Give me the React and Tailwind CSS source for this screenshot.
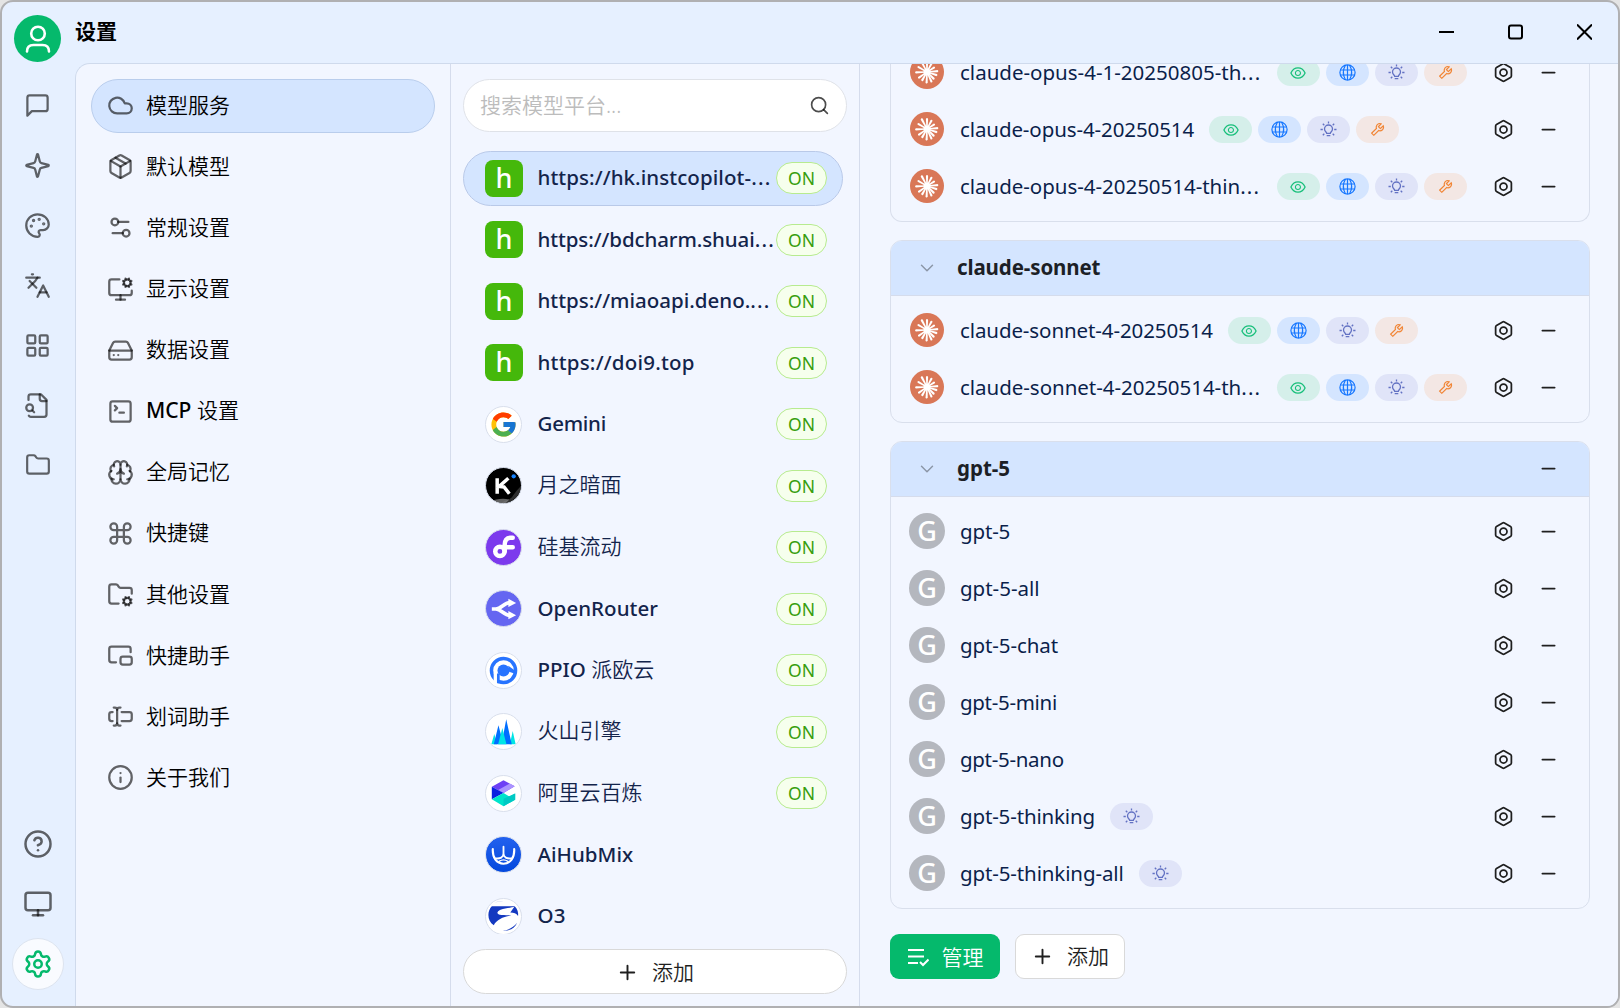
import React from "react";
import {
  Palette, Languages, LayoutGrid, Folder, CircleHelp, Monitor, Settings,
  Cloud, Package, Settings2, MonitorCog, HardDrive, SquareTerminal, Brain,
  Command, FolderCog, PictureInPicture2, TextCursorInput, Info, Search,
  Bolt, Minus, Plus, ChevronDown,
} from "lucide-react";
import { FcGoogle } from "react-icons/fc";
import { AiOutlineEye, AiOutlineTool } from "react-icons/ai";

function Stroke({ size = 27, children, className = "" }) {
  return (
    <svg width={size} height={size} viewBox="0 0 24 24" fill="none" stroke="currentColor" strokeWidth="2" strokeLinecap="round" strokeLinejoin="round" className={className}>
      {children}
    </svg>
  );
}

const Chat = () => (
  <Stroke><path d="M21 15a2 2 0 0 1-2 2H7l-4 4V5a2 2 0 0 1 2-2h14a2 2 0 0 1 2 2z" /></Stroke>
);
const Sparkle = () => (
  <Stroke><path d="M9.937 15.5A2 2 0 0 0 8.5 14.063l-6.135-1.582a.5.5 0 0 1 0-.962L8.5 9.936A2 2 0 0 0 9.937 8.5l1.582-6.135a.5.5 0 0 1 .963 0L14.063 8.5A2 2 0 0 0 15.5 9.937l6.135 1.581a.5.5 0 0 1 0 .964L15.5 14.063a2 2 0 0 0-1.437 1.437l-1.582 6.135a.5.5 0 0 1-.963 0z" /></Stroke>
);
const FileSearch = () => (
  <Stroke>
    <path d="M14 2v4a2 2 0 0 0 2 2h4" />
    <path d="M4.268 21a2 2 0 0 0 1.727 1H18a2 2 0 0 0 2-2V7l-5-5H6a2 2 0 0 0-2 2v3" />
    <path d="m9 18-1.5-1.5" />
    <circle cx="5" cy="14" r="3" />
  </Stroke>
);

const navIcons = [
  <Chat />, <Sparkle />, <Palette size={27} />, <Languages size={27} />,
  <LayoutGrid size={27} />, <FileSearch />, <Folder size={26} />,
];

const settings = [
  [Cloud, "模型服务"], [Package, "默认模型"], [Settings2, "常规设置"],
  [MonitorCog, "显示设置"], [HardDrive, "数据设置"], [SquareTerminal, "设置", "MCP"],
  [Brain, "全局记忆"], [Command, "快捷键"], [FolderCog, "其他设置"],
  [PictureInPicture2, "快捷助手"], [TextCursorInput, "划词助手"], [Info, "关于我们"],
];

function Letter() {
  return (
    <div className="flex h-[37px] w-[38px] items-center justify-center rounded-[8px] bg-[#45b80b] pb-[2px] text-[27px] leading-none font-medium text-white">h</div>
  );
}

function Round({ className = "bg-white", children }) {
  return (
    <div className={`flex h-[37px] w-[37px] items-center justify-center overflow-hidden rounded-full border border-[#d9dfec] ${className}`}>
      {children}
    </div>
  );
}

const Kimi = () => (
  <Round className="bg-black">
    <svg width="36" height="36" viewBox="0 0 36 36">
      <path d="M15 36c3-3 9-3 12-7s4-6 9-11v18z" fill="#3c3c3c" opacity=".75" />
      <path d="M4 34c6-2 12-4 20-2l-4 4H6z" fill="#8a8a8a" opacity=".7" />
      <path d="M11.500 10v16M23 10l-9.500 8.500 5 .5 5.500 7" fill="none" stroke="#fff" strokeWidth="3.600" />
      <circle cx="28.500" cy="8" r="2.200" fill="#1783ff" />
    </svg>
  </Round>
);
const Silicon = () => (
  <Round className="bg-[#7c3aed]">
    <svg width="36" height="36" viewBox="0 0 36 36" fill="none" stroke="#fff" strokeWidth="4.600" strokeLinecap="round">
      <circle cx="14.300" cy="22.500" r="4.800" />
      <path d="M19.200 22.500v-6.500c0-5 2-7.500 6-7.500h2.300M19.200 18.300h8.300" />
    </svg>
  </Round>
);
const OpenRouter = () => (
  <Round className="bg-[#6566f1]">
    <svg width="36" height="36" viewBox="0 0 36 36">
      <path d="M6 18h4c6 0 8-6.500 15-6.500M10 18c6 0 8 6.500 15 6.500" fill="none" stroke="#fff" strokeWidth="3.800" />
      <path d="M23 7.500l8 4.200-8 4.300zM23 20l8 4.300-8 4.200z" fill="#fff" />
    </svg>
  </Round>
);
const Ppio = () => (
  <Round>
    <svg width="35" height="35" viewBox="0 0 36 36">
      <circle cx="18" cy="18" r="12.400" fill="none" stroke="#2874ff" strokeWidth="3.600" />
      <circle cx="18" cy="18" r="6.200" fill="#2874ff" />
      <path d="M23 13l6 4.500v3.500l-6-2z" fill="#2874ff" />
      <path d="M9.600 20v14" stroke="#fff" strokeWidth="3.400" />
      <path d="M12.700 21v10" stroke="#2874ff" strokeWidth="2.800" />
    </svg>
  </Round>
);
const Volc = () => (
  <Round>
    <svg width="36" height="36" viewBox="0 0 36 36">
      <path d="M5.500 30.500L8.500 20l3 10.500z M24.500 30.500L27.500 17l3 13.500z" fill="#00e5e5" />
      <path d="M8 30.500L12.800 11 18 30.500z M16 30.500L20.800 5 26.500 30.500z" fill="#006eff" />
      <path d="M12.500 30.500l4.300-16.500 4.200 16.500z" fill="#00e5e5" />
    </svg>
  </Round>
);
const Bailian = () => (
  <Round>
    <svg width="36" height="36" viewBox="0 0 36 36">
      <path d="M6 11.500l12-6.500 11.500 6L18 18z" fill="#6e40f5" />
      <path d="M12.500 15l12-6.700 5 2.700-11.500 7z" fill="#ab93ff" />
      <path d="M6 11.500l12 6.500-12 6.500z" fill="#0a1fe0" />
      <path d="M6 24.500L18 18l6 3.500 6-3v6.500l-12 6.500z" fill="#00e4cb" />
      <path d="M18 24l12-5.500V25l-12 6.500z" fill="#00c9c4" />
    </svg>
  </Round>
);
const AiHubMix = () => (
  <Round className="bg-linear-to-b from-[#2261ee] to-[#0348dd]">
    <svg width="36" height="36" viewBox="0 0 36 36" fill="none" stroke="#fff" strokeWidth="2.200" strokeLinecap="round">
      <path d="M7 12c-.5 9 4 15 11 15s11.500-6 11-15" />
      <path d="M18 9.500v7c0 4-3.500 5.500-8 5M18 16.500c0 4 3.500 5.500 8 5" strokeWidth="1.900" />
      <path d="M13.500 24.500q4.500-3 9 0" strokeWidth="1.400" />
    </svg>
  </Round>
);
const O3 = () => (
  <Round>
    <svg width="36" height="36" viewBox="0 0 36 36" fill="#1439c0">
      <path d="M6 8h24c-4 2-10 1.500-15 3.500-5 2.500-4 5 1 5.500 4 .3 7 0 10 .5-8 1-15 4-18 10C1 23 1 13 6 8z" />
      <path d="M25 14.500l4.500-6.500c3 3 4 7 3.500 10-2-2.500-4-3.500-8-3.500z" />
      <path d="M16 33c7 0 12-3 16-8-2 5-7 9-16 8z" />
      <path d="M9 4.500c3-2 6-2 9-2-3 .5-6 .5-9 2z" opacity=".4" />
    </svg>
  </Round>
);

const providers = [
  [<Letter />, "https://hk.instcopilot-", true, "tracking-[0.07px]", "", true],
  [<Letter />, "https://bdcharm.shuai", true, "tracking-[-0.1px]", "", true],
  [<Letter />, "https://miaoapi.deno.", true, "tracking-[0px]", "", true],
  [<Letter />, "https://doi9.top", true, "tracking-[0.22px]"],
  [<Round><FcGoogle size={29} /></Round>, "Gemini", true, "tracking-[-0.25px]"],
  [<Kimi />, "月之暗面", true, ""],
  [<Silicon />, "硅基流动", true, ""],
  [<OpenRouter />, "OpenRouter", true, "tracking-[0.05px]"],
  [<Ppio />, "派欧云", true, "", "PPIO"],
  [<Volc />, "火山引擎", true, ""],
  [<Bailian />, "阿里云百炼", true, ""],
  [<AiHubMix />, "AiHubMix", false, "tracking-[0.05px]"],
  [<O3 />, "O3", false, "tracking-[0.2px]"],
];

const isHan = (text) => /[\u4e00-\u9fff]/.test(text);

const rays = [
  [0, 11], [28, 10.5], [58, 9.5], [85, 11.5], [108, 11], [135, 10.5], [155, 11.5],
  [182, 11.5], [210, 10.5], [235, 11], [268, 12], [300, 11], [332, 12],
];

function ClaudeAvatar() {
  return (
    <svg width="34" height="34" viewBox="-17 -17 34 34" className="mx-px mb-[1px] shrink-0">
      <circle r="17" fill="#d97757" />
      <circle r="3.500" fill="#fff" />
      {rays.map(([a, l]) => (
        <path key={a} d={`M-.6 0L-1.100 ${-l + 0.8}Q0 ${-l - 0.8} 1.100 ${-l + 0.8}L.6 0z`} transform={`rotate(${a})`} fill="#fff" />
      ))}
    </svg>
  );
}

function GAvatar() {
  return (
    <div className="mb-[1px] flex h-9 w-9 shrink-0 items-center justify-center rounded-full bg-[#b4b7be] pb-[1px] text-[27px] leading-none font-medium text-white">G</div>
  );
}

const Globe = () => (
  <svg width="17" height="17" viewBox="0 0 17 17" fill="none" stroke="currentColor" strokeWidth="1.200">
    <circle cx="8.500" cy="8.500" r="7.600" />
    <path d="M1 6h15M1 11h15M8.500 1v15M6.500 1c-2.600 4.500-2.600 10.500 0 15M10.500 1c2.600 4.500 2.600 10.500 0 15" />
  </svg>
);
const Bulb = () => (
  <svg width="17" height="17" viewBox="0 0 17 17" fill="none" stroke="currentColor" strokeWidth="1.300">
    <path d="M6.700 12.300c0-1-2.200-2-2.200-4.300a4 4 0 0 1 8 0c0 2.300-2.200 3.300-2.200 4.300zM6.700 14.700h3.600M8.500 .6v2M.5 8.500h2.300M14.200 8.500h2.300M2.800 2.800l1.500 1.500M14.200 2.800l-1.500 1.500M2.800 14.200l1.500-1.500M14.200 14.200l-1.500-1.500" />
  </svg>
);

function Tag({ className, children }) {
  return <span className={`flex h-[27px] w-[43px] shrink-0 items-center justify-center rounded-full ${className}`}>{children}</span>;
}

function ModelRow({ name, kind, tags, tracking = "", cut }) {
  return (
    <div className="flex h-9 items-center pr-[30px] pl-[18px]">
      {kind === "claude" ? <ClaudeAvatar /> : <GAvatar />}
      <span className={`ml-[15px] text-[20.5px] leading-none whitespace-nowrap text-[#0b1f4b] ${cut ? "w-[301.500px]" : ""} ${tracking}`}>
        {name}{cut && <span className="tracking-[1.200px]">...</span>}
      </span>
      <div className="ml-[15px] flex gap-[6px]">
        {tags === "all" && <Tag className="bg-[#d5efea] text-[#17bf7a]"><AiOutlineEye size={18} /></Tag>}
        {tags === "all" && <Tag className="bg-[#d4e5ff] text-[#1677ff]"><Globe /></Tag>}
        {tags && <Tag className="bg-[#e0e4f8] text-[#6372c3]"><Bulb /></Tag>}
        {tags === "all" && <Tag className="bg-[#f3e7e4] text-[#f18637]"><AiOutlineTool size={17} /></Tag>}
      </div>
      <Bolt size={21} className="ml-auto text-[#1f1f1f]" />
      <Minus size={21} className="ml-[24px] text-[#1f1f1f]" strokeWidth={2} />
    </div>
  );
}

function GroupHeader({ name, removable, tracking = "" }) {
  return (
    <div className="flex h-[55px] items-center border-b border-[#d5dcec] bg-[#d4e5ff] pr-[30px] pl-[26px]">
      <ChevronDown size={22} strokeWidth={1.6} className="mr-[19px] -ml-px text-[#8c97a8]" />
      <span className={`pb-[1px] text-[20.5px] leading-none font-bold text-[#1c1f26] ${tracking}`}>{name}</span>
      {removable && <Minus size={21} className="mb-[1px] ml-auto text-[#1f1f1f]" />}
    </div>
  );
}

const bodyCls = "flex flex-col gap-[21px] py-[16.500px]";

export default function App() {
  return (
    <div className="h-[1008px] w-[1620px] overflow-hidden bg-[#e4e4e4] font-['Noto_Sans','Noto_Sans_CJK_SC',sans-serif]">
      <div className="flex h-full w-full overflow-hidden rounded-[13px] border-2 border-[#b0b0b2] bg-[#e6f0ff]">
        <aside className="flex w-[73px] shrink-0 flex-col items-center pt-[13px] pb-[16px] text-black/60 [&_svg]:shrink-0">
          <div className="mr-[2px] flex h-[47px] w-[47px] shrink-0 items-center justify-center rounded-full bg-[#05b96c] text-white">
            <svg width="30" height="30" viewBox="0 0 30 30" fill="none" stroke="currentColor" strokeWidth="2.600" strokeLinecap="round">
              <circle cx="15" cy="9.500" r="6.800" />
              <path d="M4 27.500c0-4.500 2.500-6.500 6.500-6.500h9c4 0 6.500 2 6.500 6.500" />
            </svg>
          </div>
          <nav className="mt-[13px] mr-[2px] flex flex-col items-center">
            {navIcons.map((icon, i) => (
              <div key={i} className="flex h-[60px] w-[60px] items-center justify-center">{icon}</div>
            ))}
          </nav>
          <div className="mt-auto mr-[1px] flex flex-col items-center">
            <div className="flex h-[60px] items-center"><CircleHelp size={30} /></div>
            <div className="flex h-[60px] items-center"><Monitor size={30} /></div>
            <div className="mt-[4px] mr-px flex h-[52px] w-[52px] items-center justify-center rounded-full border border-[#dde4ef] bg-[#f9fbff] text-[#05b96c]">
              <Settings size={30} />
            </div>
          </div>
        </aside>

        <div className="flex min-w-0 flex-1 flex-col">
          <header className="flex h-[61px] shrink-0 items-center justify-between pr-[26px]">
            <h1 className="pb-[3px] text-[21px] leading-none font-bold text-black">设置</h1>
            <div className="flex items-center gap-[54px] pb-[1px] text-black">
              <svg width="15" height="16" viewBox="0 0 15 16"><path d="M0 8h15" stroke="currentColor" strokeWidth="2" /></svg>
              <svg width="15" height="16" viewBox="0 0 15 16"><rect x="1" y="1.500" width="13" height="13" rx="2" fill="none" stroke="currentColor" strokeWidth="2" /></svg>
              <svg width="15" height="16" viewBox="0 0 15 16"><path d="M0 .5l15 15M15 .5l-15 15" stroke="currentColor" strokeWidth="2" /></svg>
            </div>
          </header>

          <main className="flex min-h-0 flex-1 overflow-hidden rounded-tl-[15px] border-t border-l border-[#cfdaec] bg-[#f2f6ff]">
            <section className="flex w-[375px] shrink-0 flex-col gap-[7.500px] border-r border-[#d5dcec] px-[15px] pt-[15px]">
              {settings.map(([Icon, label, latin], i) => (
                <div key={label + i} className={`flex h-[53.600px] items-center rounded-full border pl-[15px] ${i === 0 ? "border-[#b9cdec] bg-[#d4e5ff]" : "border-transparent"}`}>
                  <Icon size={27} className="shrink-0 text-black/60" />
                  <span className="ml-[12px] pb-[1px] text-[21px] leading-none font-[350] text-black">
                    {latin && <span className="font-medium">{latin} </span>}{label}
                  </span>
                </div>
              ))}
            </section>

            <section className="flex w-[409px] shrink-0 flex-col border-r border-[#d5dcec] px-[12px] pt-[15px]">
              <div className="flex h-[53px] w-[384px] shrink-0 items-center justify-between rounded-full border border-[#dfe2e8] bg-white pr-[16px] pl-[16px]">
                <span className="text-[21px] leading-none font-[350] text-[#bcbcbc]">搜索模型平台...</span>
                <Search size={21} className="text-black/70" strokeWidth={1.900} />
              </div>
              <div className="mt-[19px] flex h-[783px] shrink-0 flex-col gap-[7px] overflow-hidden">
                {providers.map(([logo, name, on, tracking, latin, cut], i) => (
                  <div key={i} className={`flex h-[54.500px] w-[380px] shrink-0 items-center rounded-full border pr-[15px] pl-[21px] ${i === 0 ? "border-[#b9c9e8] bg-[#d4e5ff]" : "border-transparent"}`}>
                    <div className="w-[38px] shrink-0">{logo}</div>
                    <span className={`ml-[14.500px] pb-[2px] text-[20.5px] leading-none font-medium whitespace-nowrap text-[#13244b] ${tracking}`}>
                      {latin && <span>{latin} </span>}
                      <span className={isHan(name) ? "text-[21px] font-[350]" : ""}>{name}</span>
                      {cut && <span className="tracking-[1.200px]">...</span>}
                    </span>
                    {on && <span className="ml-auto flex h-[32px] w-[51px] shrink-0 items-center justify-center rounded-full border border-[#b7eb8f] bg-[#f6ffed] pt-[1px] text-[17.500px] leading-none text-[#389e0d]">ON</span>}
                  </div>
                ))}
              </div>
              <button className="mt-[15px] flex h-[45px] w-[384px] shrink-0 items-center justify-center gap-[13px] rounded-full border border-[#d9d9d9] bg-white pt-[1px] text-[21px] leading-none font-[350] text-[#1f1f1f]">
                <Plus size={23} strokeWidth={2} />添加
              </button>
            </section>

            <section className="flex min-w-0 flex-1 flex-col overflow-hidden pr-[28px] pl-[30px]">
              <div className="-mt-[26px] flex shrink-0 flex-col gap-[18px]">
                <div className="rounded-b-[12px] border border-t-0 border-[#d9dfec]">
                  <div className={bodyCls}>
                    <ModelRow kind="claude" name="claude-opus-4-1-20250805-th" tags="all" cut />
                    <ModelRow kind="claude" name="claude-opus-4-20250514" tags="all" tracking="tracking-[-0.1px]" />
                    <ModelRow kind="claude" name="claude-opus-4-20250514-thin" tags="all" cut tracking="tracking-[-0.03px]" />
                  </div>
                </div>
                <div className="overflow-hidden rounded-[12px] border border-[#d9dfec]">
                  <GroupHeader name="claude-sonnet" tracking="tracking-[-0.12px]" />
                  <div className={bodyCls}>
                    <ModelRow kind="claude" name="claude-sonnet-4-20250514" tags="all" tracking="tracking-[-0.1px]" />
                    <ModelRow kind="claude" name="claude-sonnet-4-20250514-th" tags="all" cut tracking="tracking-[-0.03px]" />
                  </div>
                </div>
                <div className="overflow-hidden rounded-[12px] border border-[#d9dfec]">
                  <GroupHeader name="gpt-5" removable />
                  <div className={bodyCls}>
                    <ModelRow name="gpt-5" tracking="tracking-[-0.15px]" />
                    <ModelRow name="gpt-5-all" />
                    <ModelRow name="gpt-5-chat" tracking="tracking-[-0.1px]" />
                    <ModelRow name="gpt-5-mini" tracking="tracking-[-0.3px]" />
                    <ModelRow name="gpt-5-nano" tracking="tracking-[-0.3px]" />
                    <ModelRow name="gpt-5-thinking" tags="bulb" tracking="tracking-[-0.15px]" />
                    <ModelRow name="gpt-5-thinking-all" tags="bulb" tracking="tracking-[-0.12px]" />
                  </div>
                </div>
              </div>
              <div className="mt-[25px] flex gap-[15px] text-[21px] leading-none font-[350]">
                <button className="flex h-[45px] w-[110px] items-center justify-center gap-[13px] rounded-[9px] bg-[#05b96c] pt-[1px] text-white">
                  <svg width="22" height="22" viewBox="0 0 22 22" fill="none" stroke="currentColor" strokeWidth="2">
                    <path d="M1 4h16M1 10.500h16M1 17h10M13 16l3 3 5.500-5.500" />
                  </svg>
                  管理
                </button>
                <button className="flex h-[45px] w-[110px] items-center justify-center gap-[13px] rounded-[9px] border border-[#d9d9d9] bg-white text-[#1f1f1f]">
                  <Plus size={23} strokeWidth={2} />添加
                </button>
              </div>
            </section>
          </main>
        </div>
      </div>
    </div>
  );
}
